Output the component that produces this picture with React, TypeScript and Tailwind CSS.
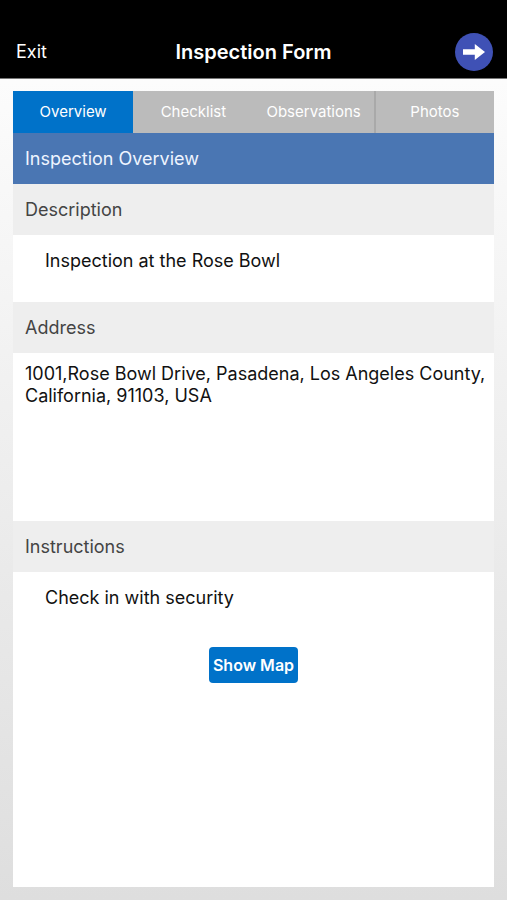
import { useState } from "react"
import type { ReactNode } from "react"

const tabs = ["Overview", "Checklist", "Observations", "Photos"]

function SectionTitle({ children }: { children: ReactNode }) {
  return <h3 className="bg-[#eeeeee] px-3 py-3 text-lg leading-[27px] text-[#444444]">{children}</h3>
}

export default function App() {
  const [active, setActive] = useState("Overview")

  return (
    <div className="flex min-h-screen flex-col bg-linear-to-b from-white to-[#dedede] font-[Inter,sans-serif] text-[#111111]">
      <header className="grid grid-cols-[1fr_auto_1fr] items-center border-b border-[#777777] bg-black px-4 pt-[31px] pb-[5px] text-white">
        <button className="justify-self-start text-lg">Exit</button>
        <h1 className="text-xl font-semibold">Inspection Form</h1>
        <button aria-label="Next" className="-mr-0.5 justify-self-end py-0.5">
          <svg className="h-[38px] w-[38px]" viewBox="0 0 38 38">
            <circle cx="19" cy="19" r="19" fill="#3f51b5" />
            <path d="M8 16.3h11.8V11L30 19l-10.2 8v-5.3H8z" fill="#fff" />
          </svg>
        </button>
      </header>

      <main className="m-[13px] mt-3 flex flex-1 flex-col bg-white">
        <nav className="grid grid-cols-4 bg-[#bbbbbb]">
          {tabs.map((tab) => (
            <button
              key={tab}
              onClick={() => setActive(tab)}
              className={`h-[42px] text-[15px] text-white last:border-l-2 last:border-[#a9a9a9] ${
                active === tab ? "bg-[#0072c9]" : ""
              }`}
            >
              {tab}
            </button>
          ))}
        </nav>

        <h2 className="bg-[#4a76b3] px-3 py-3 text-lg leading-[27px] text-[#eef4ff]">Inspection Overview</h2>

        <SectionTitle>Description</SectionTitle>
        <p className="px-8 pt-3 pb-7 text-lg leading-[27px]">Inspection at the Rose Bowl</p>

        <SectionTitle>Address</SectionTitle>
        <p className="min-h-[168px] py-2.5 pr-1 pl-3 text-lg leading-[22px]">
          1001,Rose Bowl Drive, Pasadena, Los Angeles County, California, 91103, USA
        </p>

        <SectionTitle>Instructions</SectionTitle>
        <p className="px-8 pt-3 text-lg leading-[27px]">Check in with security</p>
        <button className="mt-9 self-center rounded-sm bg-[#0072c9] px-1 py-1.5 text-base font-semibold text-white">
          Show Map
        </button>
      </main>
    </div>
  )
}
